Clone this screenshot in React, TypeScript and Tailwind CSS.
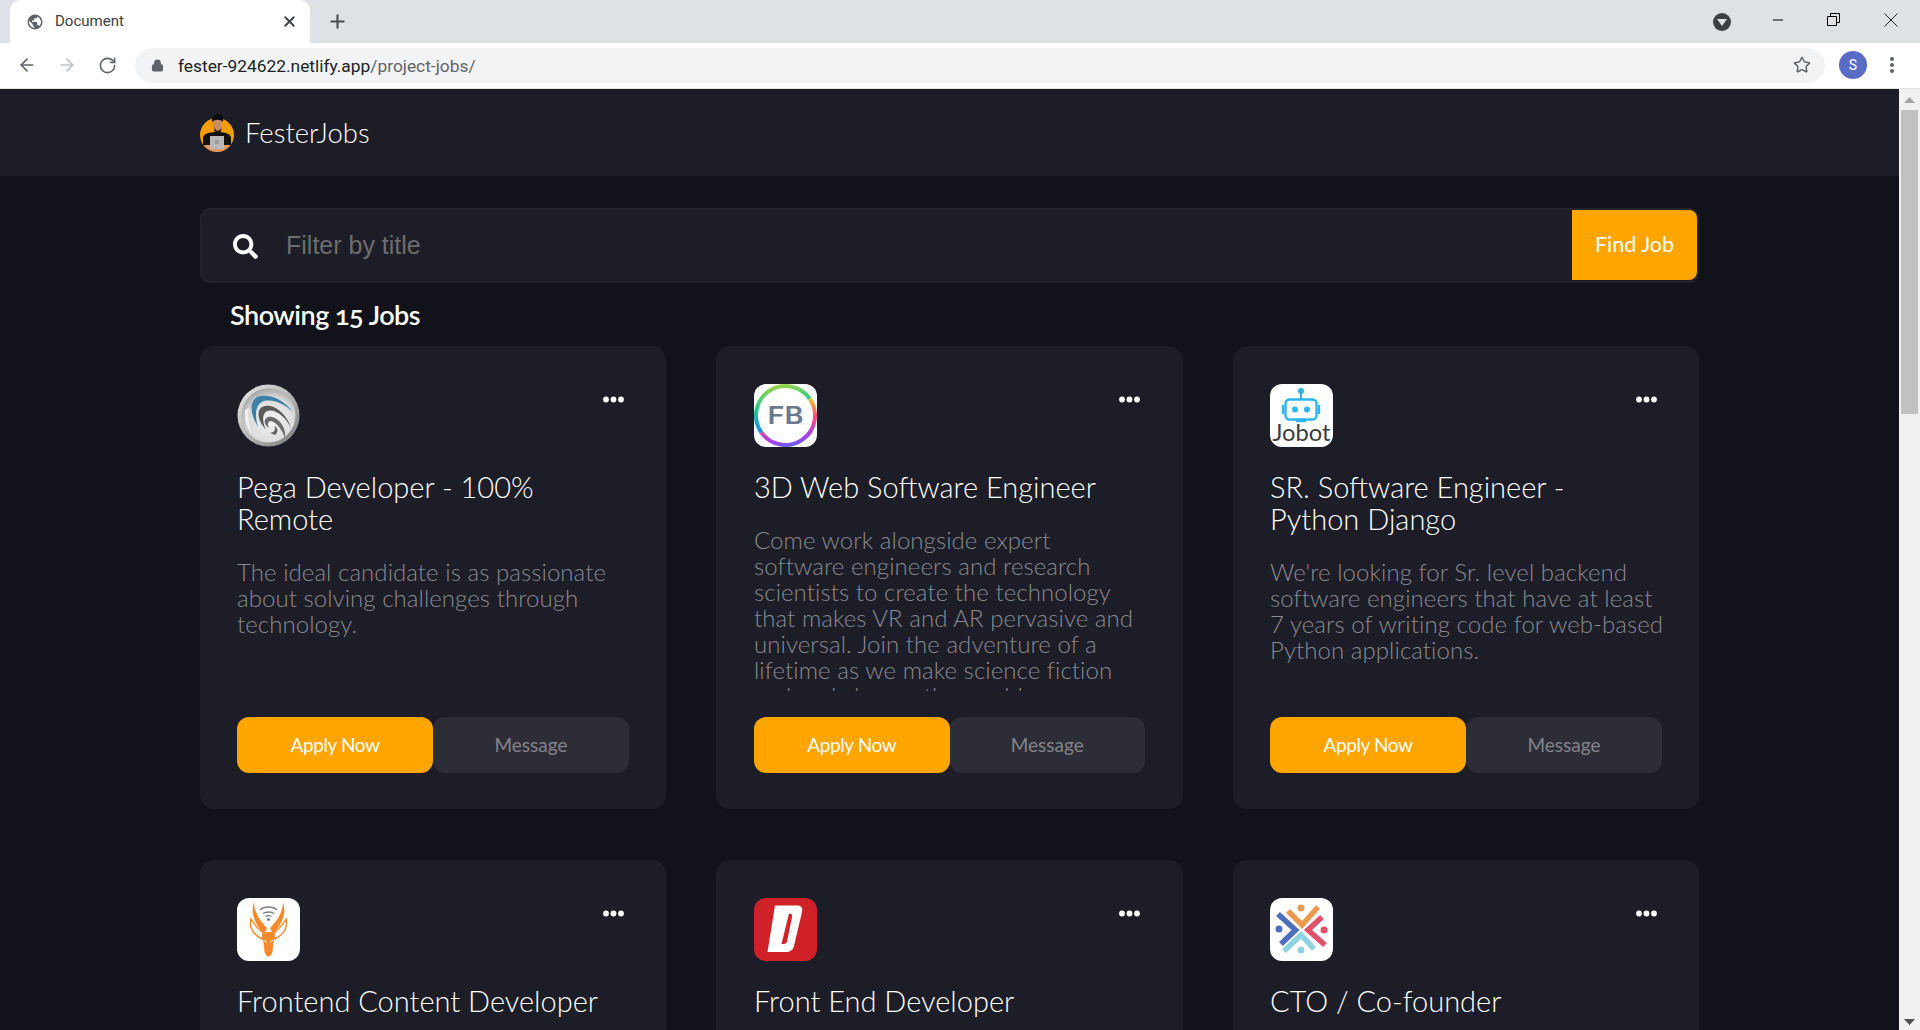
import React from "react";
import { FaSearch } from "react-icons/fa";
import { ArrowLeft, ArrowRight, RotateCw, Star, Plus, X, Lock, Minus } from "lucide-react";

function Dots() {
  return (
    <svg width="21" height="7" viewBox="0 0 21 7" className="mt-[12px] mr-[5px]">
      <circle cx="3" cy="3.5" r="2.9" fill="#fff" />
      <circle cx="10.5" cy="3.5" r="2.9" fill="#fff" />
      <circle cx="18" cy="3.5" r="2.9" fill="#fff" />
    </svg>
  );
}

function Pega() {
  return (
    <svg width="63" height="63" viewBox="0 0 63 63">
      <defs>
        <radialGradient id="pg" cx="55%" cy="60%" r="60%">
          <stop offset="0%" stopColor="#f4f4f4" />
          <stop offset="70%" stopColor="#dcdcdc" />
          <stop offset="100%" stopColor="#a8a8a8" />
        </radialGradient>
        <linearGradient id="pr" x1="0" y1="0" x2="1" y2="1">
          <stop offset="0%" stopColor="#ededed" />
          <stop offset="55%" stopColor="#b0b0b0" />
          <stop offset="100%" stopColor="#777" />
        </linearGradient>
      </defs>
      <circle cx="31.5" cy="31.5" r="31" fill="url(#pr)" />
      <circle cx="31.5" cy="31.5" r="27" fill="url(#pg)" />
      <path d="M56 28C46 14 30 9 20 13 13 17 12 28 21 43 17 29 19 20 27 17 37 15 47 20 56 28Z" fill="#3f80a8" />
      <path d="M54 44C50 30 36 18 25 23 19 27 21 37 29 46 25 37 25 30 30 27 38 24 49 33 54 44Z" fill="#5a5a5a" />
      <path d="M48 54C50 42 39 31 31 33 26 35 27 41 32 44 30 40 31 37 34 37 39 38 45 45 48 54Z" fill="#6a6a6a" />
      <path d="M38 51C42 48 41 43 37 42 39 45 38 48 33 49Z" fill="#666" />
      <path d="M8 26C7 36 10 44 15 50 12 42 10 34 12 24Z" fill="#fff" opacity="0.7" />
    </svg>
  );
}

function FB() {
  return (
    <svg width="63" height="63" viewBox="0 0 63 63" className="rounded-[12px] bg-white">
      <defs>
        <linearGradient id="fa" x1="1" y1="0" x2="0" y2="1">
          <stop offset="0%" stopColor="#f5c52c" />
          <stop offset="35%" stopColor="#ff4f7a" />
          <stop offset="70%" stopColor="#a53df0" />
          <stop offset="100%" stopColor="#1a8cf0" />
        </linearGradient>
        <linearGradient id="fb" x1="0" y1="1" x2="1" y2="0">
          <stop offset="0%" stopColor="#1a8cf0" />
          <stop offset="45%" stopColor="#21c98a" />
          <stop offset="100%" stopColor="#c9d92c" />
        </linearGradient>
      </defs>
      <path d="M61 31.5A29.500 29.500 0 0 1 2 31.5" fill="none" stroke="url(#fa)" strokeWidth="4" transform="rotate(-35 31.5 31.5)" />
      <path d="M2 31.5A29.500 29.500 0 0 1 61 31.5" fill="none" stroke="url(#fb)" strokeWidth="4" transform="rotate(-35 31.5 31.5)" />
      <text x="31.500" y="40" textAnchor="middle" fontFamily="Inter, sans-serif" fontWeight="600" fontSize="24" fill="#6b7a8c" textLength="36" lengthAdjust="spacingAndGlyphs">FB</text>
    </svg>
  );
}

function Jobot() {
  return (
    <svg width="63" height="63" viewBox="0 0 63 63" className="rounded-[12px] bg-white">
      <circle cx="31" cy="7" r="3" fill="#2bb5ec" />
      <path d="M31 8V15" stroke="#2bb5ec" strokeWidth="2" />
      <rect x="15.5" y="15.5" width="31" height="20" rx="4" fill="none" stroke="#2bb5ec" strokeWidth="2.4" />
      <path d="M13 22V29M49 22V29M27 37H35" stroke="#2bb5ec" strokeWidth="2.4" strokeLinecap="round" />
      <circle cx="25" cy="25.5" r="3" fill="#2bb5ec" />
      <circle cx="37" cy="25.5" r="3" fill="#2bb5ec" />
      <text x="31.5" y="57" textAnchor="middle" fontFamily="Lato, sans-serif" fontWeight="400" fontSize="24" fill="#3c3c3c" textLength="58" lengthAdjust="spacingAndGlyphs">Jobot</text>
    </svg>
  );
}

function Gazelle() {
  return (
    <svg width="63" height="63" viewBox="0 0 63 63" className="rounded-[12px] bg-white">
      <path d="M27 36C18 26 13 15 17 4 17 13 22 22 30 30ZM36 36C45 26 50 15 46 4 46 13 41 22 33 30Z" fill="#f8892a" />
      <path d="M23 12C27 8 36 8 40 12M26 15.500C28.500 13.500 34.500 13.500 37 15.500M28.500 18.500C30 17.500 33 17.500 34.500 18.500" fill="none" stroke="#7d7d7d" strokeWidth="1.4" />
      <circle cx="31.500" cy="21.500" r="1.500" fill="#7d7d7d" />
      <path d="M25 41C17 37 12 30 14 21 17 27 22 31 27 36ZM38 41C46 37 51 30 49 21 46 27 41 31 36 36Z" fill="none" stroke="#f8892a" strokeWidth="1.400" />
      <path d="M25 36C28 33 35 33 38 36 37 42 36 46 35.500 54 33.500 60 29.500 60 27.500 54 27 46 26 42 25 36Z" fill="#f8892a" />
      <path d="M27 42L30 44.500M36 42L33 44.500" stroke="#fff" strokeWidth="1" />
    </svg>
  );
}

function DLogo() {
  return (
    <svg width="63" height="63" viewBox="0 0 63 63" className="rounded-[12px] bg-[#cf2127]">
      <path fillRule="evenodd" fill="#fff" d="M21 7.500H43C47.500 7.500 49 10 48 14L40 48C39 52 36 54 32 54H13.500ZM35 15.500L27.500 46H30C31.500 46 32.500 45 33 43.500L38 19C38.500 16.500 37.500 15.500 35 15.500Z" />
    </svg>
  );
}

function Cross() {
  return (
    <svg width="63" height="63" viewBox="0 0 63 63" className="rounded-[12px] bg-white">
      <g fill="none" strokeWidth="5.500">
        <path d="M18 13L32 27 48 9" stroke="#ec9a4f" />
        <path d="M7 16L24.500 32 10 46" stroke="#4f6dbd" transform="translate(1 0)" />
        <path d="M52 19L38 32 55 47" stroke="#e0506a" />
        <path d="M14 53L31 37 44 51" stroke="#8dd2e0" />
      </g>
      <circle cx="31" cy="10" r="3.500" fill="#ec9a4f" />
      <circle cx="9" cy="31" r="3.500" fill="#4f6dbd" />
      <circle cx="54" cy="32" r="3.500" fill="#e0506a" />
      <circle cx="31" cy="52" r="3.500" fill="#8dd2e0" />
    </svg>
  );
}

function Avatar() {
  return (
    <svg width="34" height="38" viewBox="0 0 34 38" className="mr-[12px]">
      <defs>
        <clipPath id="av"><path d="M0 21A17 17 0 0 1 34 21A17 17 0 0 1 0 21Z" /></clipPath>
      </defs>
      <g clipPath="url(#av)">
        <rect width="34" height="38" fill="#f59e00" />
        <path d="M3 38V24C3 20 9 18 17 18S31 20 31 24V38Z" fill="#111" />
        <path d="M4 31H30V38H4Z" fill="#e09a60" />
        <rect x="10" y="22" width="14" height="13" fill="#b9b9b9" />
        <rect x="15" y="26" width="4" height="4" fill="#9a9a9a" />
      </g>
      <path d="M13 6C13 3 21 3 22 6L21.500 15C20 19 15 19 13.500 15Z" fill="#c98d62" />
      <path d="M12 8C11 2 16 0 19 0 23 1 24 4 22.500 8 21 5 15 5 12 8Z" fill="#0c0c0c" />
      <path d="M14 13C16 18 20 18 21.500 13L21 18H14.500Z" fill="#2a1c14" />
    </svg>
  );
}

type Job = { logo: React.ReactNode; title: React.ReactNode; desc?: React.ReactNode };

const jobs: Job[] = [
  {
    logo: <Pega />,
    title: <>Pega Developer - 100%<br />Remote</>,
    desc: <>The ideal candidate is as passionate<br />about solving challenges through<br />technology.</>,
  },
  {
    logo: <FB />,
    title: <>3D Web Software Engineer</>,
    desc: <>Come work alongside expert<br />software engineers and research<br />scientists to create the technology<br />that makes VR and AR pervasive and<br />universal. Join the adventure of a<br />lifetime as we make science fiction<br />real and change the world.</>,
  },
  {
    logo: <Jobot />,
    title: <>SR. Software Engineer -<br />Python Django</>,
    desc: <>We're looking for Sr. level backend<br />software engineers that have at least<br />7 years of writing code for web-based<br />Python applications.</>,
  },
  { logo: <Gazelle />, title: <>Frontend Content Developer</> },
  { logo: <DLogo />, title: <>Front End Developer</> },
  { logo: <Cross />, title: <>CTO / Co-founder</> },
];

function Card({ job, middle }: { job: Job; middle: boolean }) {
  return (
    <div className={middle ? "h-[463px] rounded-[14px] bg-[#1c1d26] px-[38px] pt-[38px] pb-[36px] flex flex-col" : "h-[463px] rounded-[14px] bg-[#1c1d26] px-[37px] pt-[38px] pb-[36px] flex flex-col"}>
      <div className="flex justify-between items-start h-[63px] shrink-0">
        {job.logo}
        <Dots />
      </div>
      <h2 className="mt-[24px] text-[29px] leading-[32px] font-light text-white whitespace-nowrap shrink-0">{job.title}</h2>
      <p className="mt-[24px] -mr-[4px] flex-1 min-h-0 overflow-hidden text-[24px] leading-[26px] font-light tracking-[0.06px] text-[#8a8a92] whitespace-nowrap">{job.desc}</p>
      <div className="mt-[26px] grid grid-cols-2 h-[56px] shrink-0 text-[19px]">
        <button className="rounded-[12px] bg-[#ffa500] text-white font-normal tracking-[-0.4px]">Apply Now</button>
        <button className="rounded-[12px] bg-[#2c2d36] text-[#84848b] font-normal">Message</button>
      </div>
    </div>
  );
}

function Chrome() {
  return (
    <div className="shrink-0 font-[Roboto,sans-serif]">
      <div className="h-[43px] bg-[#dee1e6] flex items-end pl-[10px]">
        <div className="w-[300px] h-[43px] rounded-t-[10px] bg-white flex items-center pl-[16px] pr-[12px] text-[#3c4043] text-[15px]">
          <svg width="18" height="18" viewBox="0 0 24 24" fill="#5f6368" className="mr-[11px]">
            <path d="M12 2a10 10 0 1 0 0 20 10 10 0 0 0 0-20Zm-1 17.900A8 8 0 0 1 4.200 10.200L9 15v1a2 2 0 0 0 2 2v1.900Zm6.900-2.500A2 2 0 0 0 16 16h-1v-3a1 1 0 0 0-1-1H8v-2h2a1 1 0 0 0 1-1V7h2a2 2 0 0 0 2-2v-.4a8 8 0 0 1 2.900 12.800Z" />
          </svg>
          <span className="flex-1">Document</span>
          <X size={17} strokeWidth={2.6} color="#3c4043" />
        </div>
        <div className="w-[54px] h-[43px] flex items-center justify-center pl-[1px]">
          <Plus size={21} strokeWidth={2.4} color="#4a4d51" />
        </div>
        <div className="flex-1" />
        <div className="h-[43px] flex items-center text-black">
          <div className="w-[18px] h-[18px] rounded-full bg-[#3c4043] flex items-center justify-center mt-[1px]">
            <svg width="10" height="7" viewBox="0 0 10 7"><path d="M0 0H10L5 7Z" fill="#dee1e6" /></svg>
          </div>
          <div className="w-[55px] ml-[19px] flex justify-center -mt-[4px]"><Minus size={16} strokeWidth={1} absoluteStrokeWidth /></div>
          <div className="w-[57px] flex justify-center -mt-[4px]">
            <svg width="13" height="13" viewBox="0 0 13 13" fill="none" stroke="#000"><path d="M.5 3.500H9.500V12.500H.5ZM3.500 3.500V.5H12.500V9.500H9.500" /></svg>
          </div>
          <div className="w-[58px] flex justify-center -mt-[4px]">
            <svg width="14" height="14" viewBox="0 0 14 14" fill="none" stroke="#222"><path d="M.5.5L13.500 13.500M13.500.5L.5 13.500" /></svg>
          </div>
        </div>
      </div>
      <div className="h-[46px] bg-white border-b border-[#e4e4e4] flex items-center pb-[1px]">
        <div className="w-[135px] flex items-center pl-[17px] gap-[20px]">
          <ArrowLeft size={20} strokeWidth={2} color="#5f6368" />
          <ArrowRight size={20} strokeWidth={2} color="#bdc1c6" />
          <RotateCw size={19} strokeWidth={2} color="#5f6368" className="ml-[1px]" />
        </div>
        <div className="w-[1690px] h-[35px] rounded-full bg-[#f1f3f4] flex items-center pl-[16px] pr-[14px] text-[17.350px]">
          <Lock size={13} strokeWidth={2.500} color="#5f6368" fill="#5f6368" className="mr-[14px]" />
          <span className="text-[#202124] pt-[2px]">fester-924622.netlify.app</span>
          <span className="text-[#5f6368] flex-1 pt-[2px]">/project-jobs/</span>
          <Star size={18} strokeWidth={2} color="#5f6368" />
        </div>
        <div className="w-[28px] h-[28px] ml-[14px] rounded-full bg-[#5a6bc5] text-white text-[14px] flex items-center justify-center">S</div>
        <svg width="4" height="18" viewBox="0 0 4 18" className="ml-[23px]" fill="#5f6368">
          <circle cx="2" cy="3" r="2" /><circle cx="2" cy="9" r="2" /><circle cx="2" cy="15" r="2" />
        </svg>
      </div>
    </div>
  );
}

function Scrollbar() {
  return (
    <div className="w-[21px] shrink-0 bg-[#f1f1f1] flex flex-col items-center">
      <svg width="11" height="6" viewBox="0 0 11 6" className="mt-[8px]"><path d="M0 6L5.500 0 11 6Z" fill="#a3a3a3" /></svg>
      <div className="w-[17px] h-[304px] mt-[7px] bg-[#c1c1c1]" />
      <div className="flex-1" />
      <svg width="11" height="6" viewBox="0 0 11 6" className="mb-[5px]"><path d="M0 0L5.500 6 11 0Z" fill="#505050" /></svg>
    </div>
  );
}

export default function App() {
  return (
    <div className="h-[1030px] w-[1920px] overflow-hidden flex flex-col">
      <Chrome />
      <div className="flex-1 min-h-0 flex">
        <div className="flex-1 min-w-0 bg-[#11121a] overflow-hidden font-[Lato,sans-serif]">
          <div className="h-[87px] bg-[#1c1d26]">
            <div className="w-[1499px] mx-auto h-full flex items-center">
              <Avatar />
              <span className="-ml-[1px] text-[27.500px] font-light text-white">FesterJobs</span>
            </div>
          </div>
          <div className="w-[1499px] mx-auto pt-[32px]">
            <div className="h-[75px] rounded-[10px] border-2 border-[#23242b] bg-[#1c1d26] flex items-start">
              <FaSearch size={25} color="#fff" className="ml-[31px] mt-[24px]" />
              <input
                readOnly
                placeholder="Filter by title"
                className="ml-[28px] mt-[14px] h-[42px] flex-1 bg-transparent outline-none text-[25px] font-['Liberation_Sans',sans-serif] placeholder:text-[#6d6d70]"
              />
              <div className="w-[125px] h-[70px] rounded-r-[8px] bg-[#ffa500] text-white text-[21.500px] font-normal flex items-center justify-center pb-[2px]">Find Job</div>
            </div>
            <div className="h-[63px] pl-[30px] pt-[1px] flex items-center text-[27px] font-semibold text-white tracking-[-0.5px] oldstyle-nums">Showing 15 Jobs</div>
            <div className="grid grid-cols-[466px_467px_466px] gap-x-[50px] gap-y-[51px]">
              {jobs.map((j, i) => <Card key={i} job={j} middle={i % 3 === 1} />)}
            </div>
          </div>
        </div>
        <Scrollbar />
      </div>
    </div>
  );
}
